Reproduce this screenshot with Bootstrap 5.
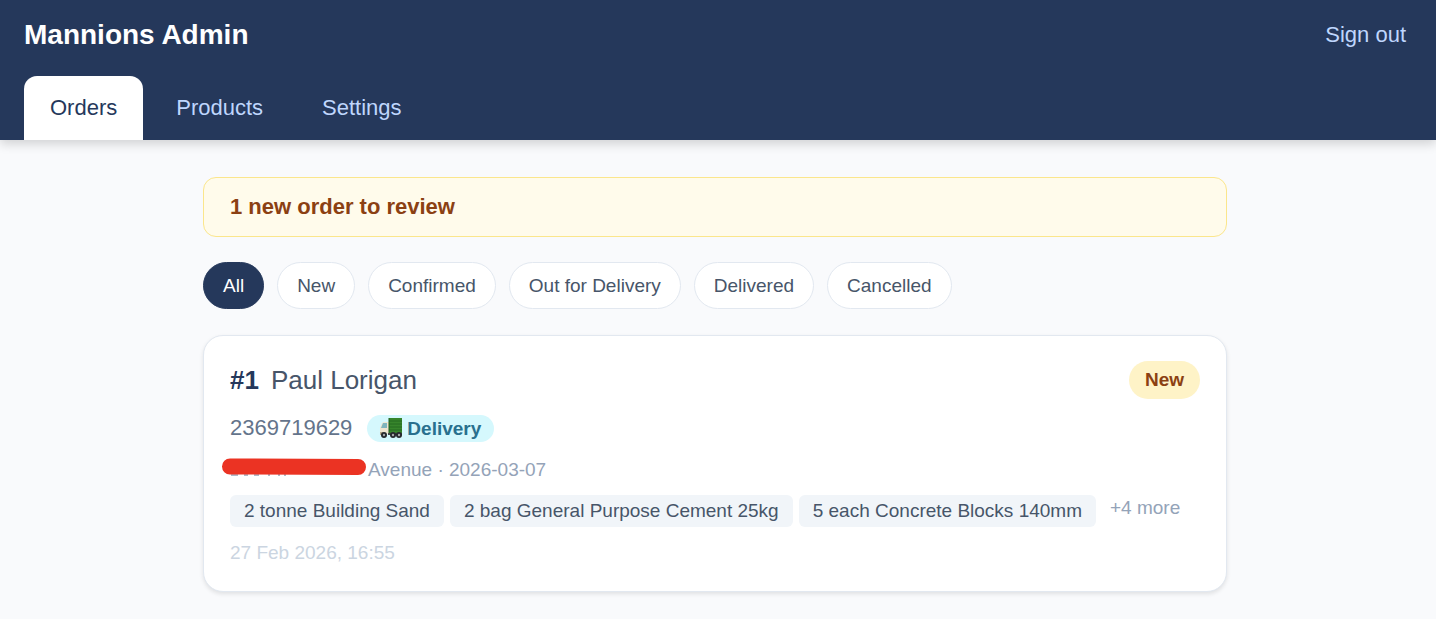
<!DOCTYPE html>
<html lang="en">
<head>
<meta charset="utf-8">
<meta name="viewport" content="width=device-width, initial-scale=1">
<title>Mannions Admin</title>
<link href="https://cdn.jsdelivr.net/npm/bootstrap@5.3.0/dist/css/bootstrap.min.css" rel="stylesheet">
<style>
  :root { --navy: #25385b; --ice: #bfd6fd; --slate: #475569; --line: #e2e8f0; }
  body { font-family: "Liberation Sans", Arial, sans-serif; font-size: 19px; line-height: 28px; background: #f9fafc; color: var(--slate); }
  .gutters { padding-left: 24px; padding-right: 30px; }
  .site-header { background: var(--navy); box-shadow: 0 4px 10px rgba(0, 0, 0, .16); }
  .title-bar { padding-top: 17px; padding-bottom: 15px; }
  .brand { font-size: 28px; line-height: 36px; color: #fff; }
  .sign-out { font-size: 22px; color: var(--ice); }
  .site-tabs { gap: 7px; margin-top: 8px; }
  .site-tabs .nav-link { font-size: 22px; line-height: 32px; padding: 16px 26px; border-radius: 13px 13px 0 0; color: var(--ice); }
  .site-tabs .nav-link.active { background: #fff; color: var(--navy); }
  .page { max-width: 1024px; padding-bottom: 24px; }
  .notice { background: #fffbeb; border: 1px solid #fbe68c; border-radius: 13px; color: #8b4012; font-size: 22px; line-height: 32px; padding: 13px 26px; margin-top: 37px; margin-bottom: 25px; }
  .filters { gap: 13px; margin-bottom: 26px; }
  .filters .btn { font-size: 19px; line-height: 27px; padding: 9px 19px; border: 1px solid var(--line); background: #fff; color: var(--slate); }
  .filters .btn.active { background: var(--navy); border-color: var(--navy); color: #fff; }
  .order { border: 1px solid var(--line); border-radius: 20px; padding: 25px 26px 24px; box-shadow: 0 2px 4px rgba(0, 0, 0, .1); }
  .order-title { font-size: 26px; line-height: 38px; gap: 12px; }
  .order-id { color: var(--navy); }
  .status { background: #fef3c7; color: #8b4012; font-size: 19px; line-height: 26px; padding: 6px 16px; }
  .contact { font-size: 22px; line-height: 32px; color: #64748b; gap: 15px; margin-top: 13px; }
  .mode { background: #d5f8fd; color: #29708e; font-size: 19px; line-height: 27px; padding: 0 13px; gap: 4px; }
  .address { color: #94a3b8; margin-top: 12px; }
  .scribble { width: 138px; height: 28px; overflow: visible; }
  .lines { gap: 6px; margin-top: 11px; }
  .line-item { background: #f1f5f9; border-radius: 6px; line-height: 26px; padding: 3px 14px; }
  .more { color: #94a3b8; line-height: 26px; padding-left: 8px; }
  .placed { color: #cbd5e1; margin-top: 12px; }
</style>
</head>
<body>
<header class="site-header">
  <div class="title-bar gutters d-flex justify-content-between align-items-center">
    <h1 class="brand fw-bold mb-0">Mannions Admin</h1>
    <a class="sign-out text-decoration-none" href="#">Sign out</a>
  </div>
  <nav class="gutters nav site-tabs" aria-label="Main">
    <a class="nav-link active" aria-current="page" href="#">Orders</a>
    <a class="nav-link" href="#">Products</a>
    <a class="nav-link" href="#">Settings</a>
  </nav>
</header>
<main class="gutters">
  <div class="page mx-auto">
    <div class="notice fw-bold">1 new order to review</div>
    <div class="filters d-flex flex-wrap">
      <button type="button" class="btn rounded-pill active">All</button>
      <button type="button" class="btn rounded-pill">New</button>
      <button type="button" class="btn rounded-pill">Confirmed</button>
      <button type="button" class="btn rounded-pill">Out for Delivery</button>
      <button type="button" class="btn rounded-pill">Delivered</button>
      <button type="button" class="btn rounded-pill">Cancelled</button>
    </div>
    <article class="card order">
      <div class="d-flex justify-content-between align-items-center">
        <h2 class="order-title d-flex fw-normal mb-0"><span class="order-id fw-bold">#1</span><span>Paul Lorigan</span></h2>
        <span class="status rounded-pill fw-bold">New</span>
      </div>
      <div class="contact d-flex align-items-center">
        <span>2369719629</span>
        <span class="mode rounded-pill fw-bold d-flex align-items-center">
          <svg width="23" height="20" viewBox="0 0 23 20" aria-hidden="true">
            <path d="M0 16V10L2 5Q3 4 5 4H9V16Z" fill="#eee5d0"/>
            <path d="M1 10 3 5H7V10Z" fill="#7fb4bd"/>
            <path d="M9 0H22V15H9Z" fill="#37852c"/>
            <path d="M9 3H22M9 6H22M9 9H22M9 12H22" stroke="#246a20"/>
            <path d="M9 0V15" stroke="#1f5c1c"/>
            <path d="M0 14H3V17H0Z" fill="#b9a98a"/>
            <path d="M8 15H22V17H8Z" fill="#46484b"/>
            <g fill="#25282c"><circle cx="4" cy="17" r="3"/><circle cx="13" cy="17" r="3"/><circle cx="19" cy="17" r="3"/></g>
            <g fill="#a5a7a9"><circle cx="4" cy="17" r="1.2"/><circle cx="13" cy="17" r="1.2"/><circle cx="19" cy="17" r="1.2"/></g>
          </svg>
          <span>Delivery</span>
        </span>
      </div>
      <div class="address d-flex">
        <svg class="scribble" viewBox="0 0 138 28" aria-hidden="true">
          <path d="M1 19H8M14 19H18M24 19H29M38 19H40M48 19H50M54 19H56" stroke="#94a3b8" stroke-width="1.6"/>
          <path d="M0 10.5 128 11" stroke="#eb3323" stroke-width="16" stroke-linecap="round"/>
        </svg>
        <span>Avenue · 2026-03-07</span>
      </div>
      <div class="lines d-flex flex-wrap align-items-start">
        <span class="line-item">2 tonne Building Sand</span>
        <span class="line-item">2 bag General Purpose Cement 25kg</span>
        <span class="line-item">5 each Concrete Blocks 140mm</span>
        <span class="more">+4 more</span>
      </div>
      <div class="placed">27 Feb 2026, 16:55</div>
    </article>
  </div>
</main>
<script src="https://cdn.jsdelivr.net/npm/bootstrap@5.3.0/dist/js/bootstrap.bundle.min.js"></script>
</body>
</html>
